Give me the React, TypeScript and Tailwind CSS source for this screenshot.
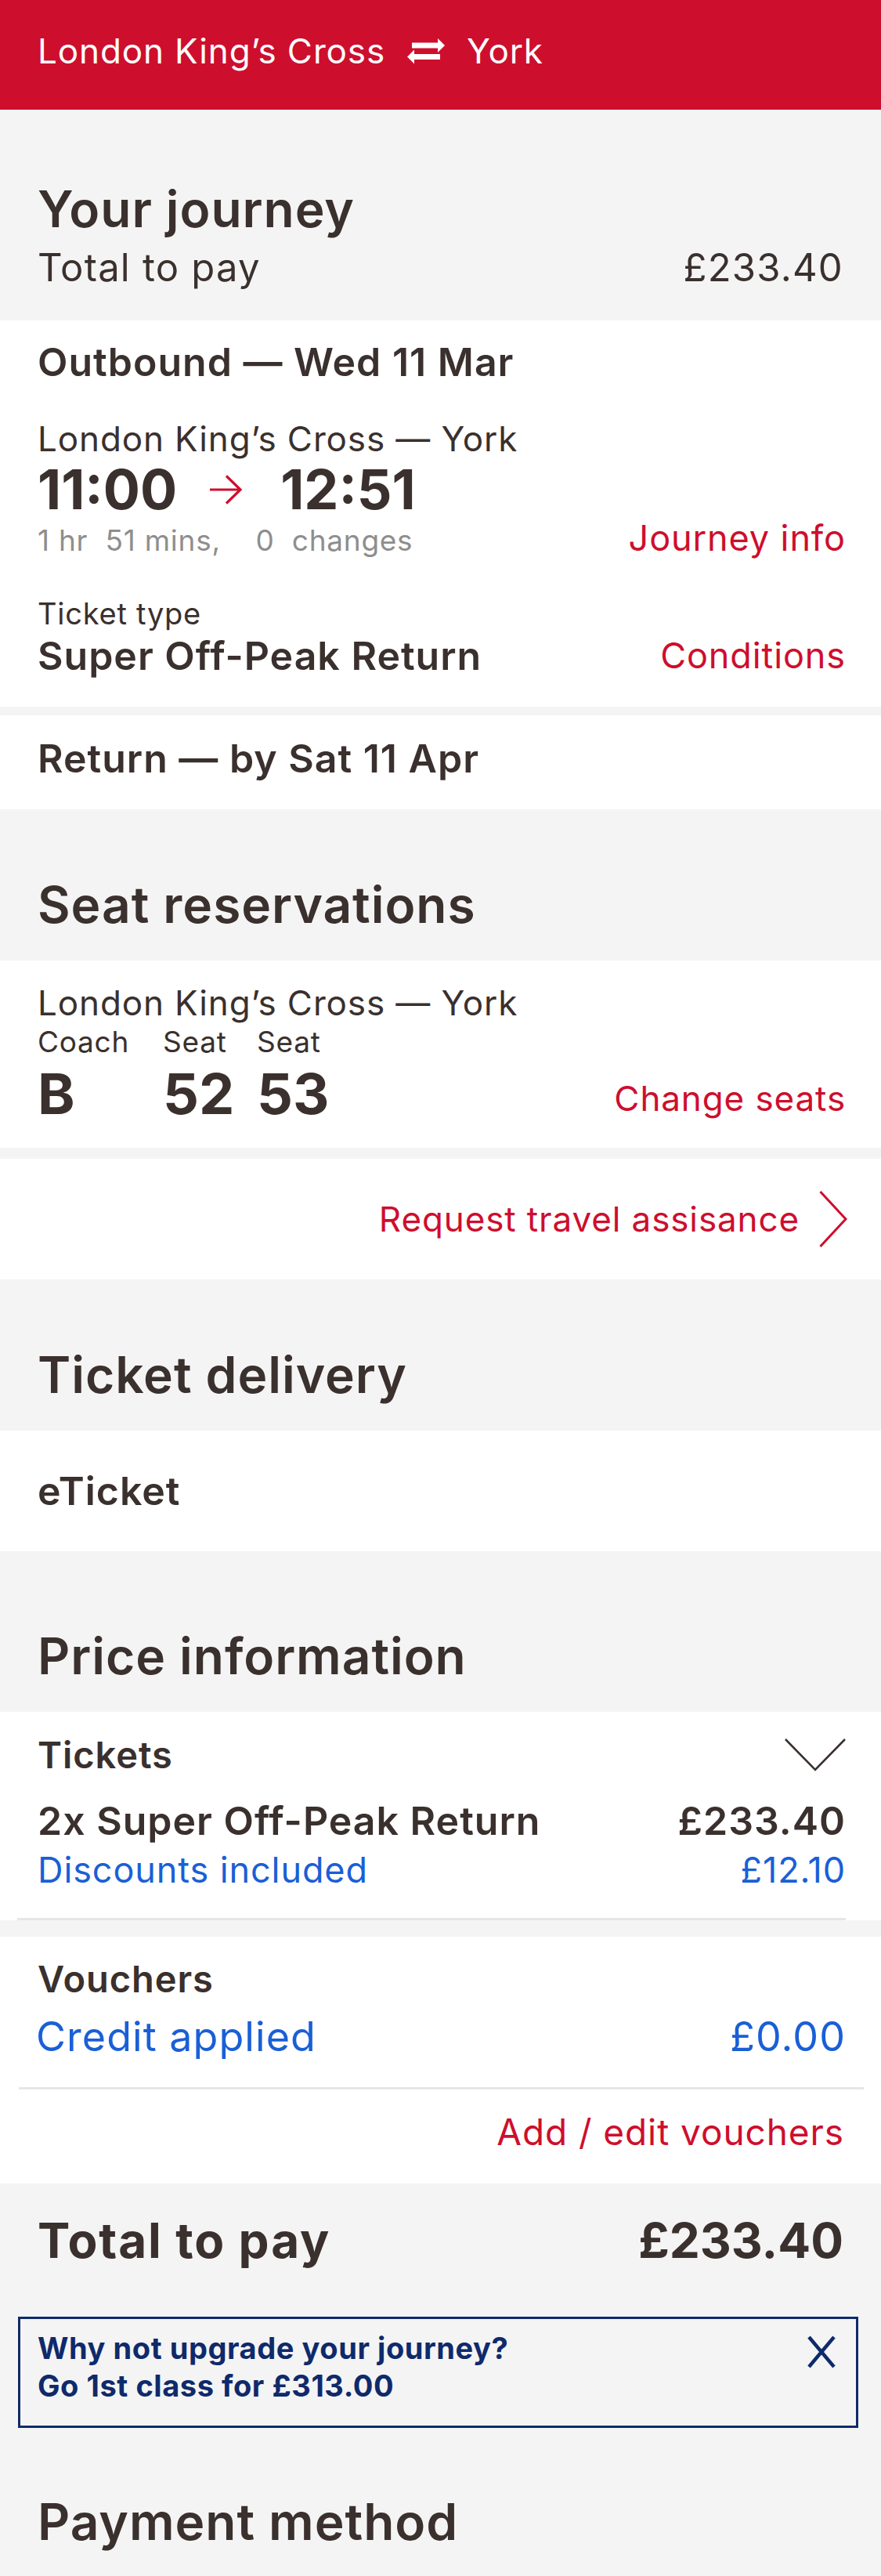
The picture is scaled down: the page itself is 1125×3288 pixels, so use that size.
import React from "react";

const RED = "text-[#ce0e2d]";

function SwapIcon() {
  return (
    <svg width="48" height="34" viewBox="0 0 48 34" className="mx-[28px] shrink-0" fill="#ffffff">
      <rect x="6" y="6.5" width="34" height="7" />
      <polygon points="39,1 48,10 39,19" />
      <rect x="8" y="21" width="34" height="7" />
      <polygon points="9,15.5 0,24.5 9,33.5" />
    </svg>
  );
}

function RightArrow() {
  return (
    <svg width="44" height="38" viewBox="0 0 44 38" className="ml-[40px] mr-[48px] shrink-0" fill="none" stroke="#ce0e2d" strokeWidth="3.2">
      <line x1="2" y1="19" x2="40" y2="19" />
      <polyline points="23,1.5 41,19 23,36.5" />
    </svg>
  );
}

function Chevron() {
  return (
    <svg width="36" height="72" viewBox="0 0 36 72" fill="none" stroke="#ce0e2d" strokeWidth="3" className="shrink-0">
      <polyline points="1.5,1 34,36 1.5,71" />
    </svg>
  );
}

function ChevronDown() {
  return (
    <svg width="78" height="42" viewBox="0 0 78 42" fill="none" stroke="#3a302d" strokeWidth="2.6" className="shrink-0">
      <polyline points="1,1 39,40 77,1" />
    </svg>
  );
}

function CloseX() {
  return (
    <svg width="44" height="42" viewBox="0 0 44 42" fill="none" stroke="#0f2a6b" strokeWidth="4.5" className="shrink-0">
      <line x1="6" y1="2" x2="38" y2="40" />
      <line x1="38" y1="2" x2="6" y2="40" />
    </svg>
  );
}

function SectionTitle({ children, pt }: { children: React.ReactNode; pt: string }) {
  return (
    <div className={`${pt} pb-[36px] px-[48px]`}>
      <h2 className="text-[64px] leading-[70px] font-semibold tracking-[0.015em]">{children}</h2>
    </div>
  );
}

export default function App() {
  return (
    <div className="min-h-screen w-[1125px] bg-[#f4f4f4] text-[#3a302d] font-['Inter',sans-serif]">
      {/* Header */}
      <div className="h-[140px] bg-[#ce0e2d] px-[48px] flex items-center pb-[10px] text-white text-[44px] tracking-[0.02em]">
        <span>London King’s Cross</span>
        <SwapIcon />
        <span>York</span>
      </div>

      {/* Your journey */}
      <div className="pt-[92px] pb-[37px] px-[48px]">
        <h2 className="text-[64px] leading-[70px] font-semibold tracking-[0.015em]">Your journey</h2>
        <div className="mt-[10px] flex justify-between items-center text-[49px] leading-[60px] tracking-[0.025em]">
          <span>Total to pay</span>
          <span>£233.40</span>
        </div>
      </div>

      {/* Outbound card */}
      <div className="bg-white pl-[48px] pr-[45px] pt-[25px] pb-[37px]">
        <div className="text-[50px] leading-[56px] font-semibold tracking-[0.02em]">Outbound — Wed 11 Mar</div>
        <div className="mt-[45px] text-[44px] leading-[50px] tracking-[0.02em]">London King’s Cross — York</div>
        <div className="-mt-[2px] flex items-center text-[70px] leading-[84px] font-bold">
          <span>11:00</span>
          <RightArrow />
          <span>12:51</span>
        </div>
        <div className="flex justify-between items-baseline">
          <span className="text-[37px] leading-[40px] text-[#8e8e8e] tracking-[0.02em]">
            1 hr&nbsp; 51 mins,&nbsp;&nbsp;&nbsp; 0&nbsp; changes
          </span>
          <span className={`text-[45px] leading-[40px] ${RED} tracking-[0.02em]`}>Journey info</span>
        </div>
        <div className="mt-[51px] flex justify-between items-end">
          <div>
            <div className="text-[38px] leading-[44px] tracking-[0.02em]">Ticket type</div>
            <div className="mt-[4px] text-[50px] leading-[56px] font-semibold tracking-[0.02em]">Super Off-Peak Return</div>
          </div>
          <span className={`text-[45px] leading-[56px] ${RED} tracking-[0.02em]`}>Conditions</span>
        </div>
      </div>

      <div className="h-[11px]" />

      {/* Return */}
      <div className="bg-white h-[120px] px-[48px] flex items-center pb-[10px]">
        <div className="text-[50px] leading-[56px] font-semibold tracking-[0.02em]">Return — by Sat 11 Apr</div>
      </div>

      <SectionTitle pt="pt-[87px]">Seat reservations</SectionTitle>

      {/* Seats card */}
      <div className="bg-white pl-[48px] pr-[45px] pt-[28px] pb-[26px]">
        <div className="text-[44px] leading-[53px] tracking-[0.02em]">London King’s Cross — York</div>
        <div className="flex justify-between items-end">
          <div className="grid grid-cols-[160px_120px_auto]">
            <span className="text-[37px] leading-[45px] tracking-[0.02em]">Coach</span>
            <span className="text-[37px] leading-[45px] tracking-[0.02em]">Seat</span>
            <span className="text-[37px] leading-[45px] tracking-[0.02em]">Seat</span>
            <span className="text-[72px] leading-[87px] font-bold">B</span>
            <span className="text-[72px] leading-[87px] font-bold">52</span>
            <span className="text-[72px] leading-[87px] font-bold">53</span>
          </div>
          <span className={`mb-[9px] text-[44px] leading-[56px] ${RED} tracking-[0.02em]`}>Change seats</span>
        </div>
      </div>

      <div className="h-[14px]" />

      {/* Request assistance */}
      <div className="bg-white h-[154px] pr-[43px] flex items-center justify-end gap-[25px]">
        <span className={`text-[44px] leading-[50px] ${RED} tracking-[0.02em]`}>Request travel assisance</span>
        <Chevron />
      </div>

      <SectionTitle pt="pt-[87px]">Ticket delivery</SectionTitle>

      <div className="bg-white h-[154px] px-[48px] flex items-center">
        <span className="text-[50px] leading-[56px] font-semibold tracking-[0.02em]">eTicket</span>
      </div>

      <SectionTitle pt="pt-[99px]">Price information</SectionTitle>

      {/* Tickets */}
      <div className="bg-white pt-[27px]">
        <div className="pl-[48px] pr-[45px]">
          <div className="flex justify-between items-center">
            <span className="text-[47px] leading-[56px] font-semibold tracking-[0.02em]">Tickets</span>
            <ChevronDown />
          </div>
          <div className="mt-[28px] flex justify-between items-center text-[50px] leading-[56px] font-semibold tracking-[0.02em]">
            <span>2x Super Off-Peak Return</span>
            <span>£233.40</span>
          </div>
          <div className="mt-[10px] flex justify-between items-center text-[45px] leading-[50px] text-[#1a5fd6] tracking-[0.02em]">
            <span>Discounts included</span>
            <span>£12.10</span>
          </div>
        </div>
        <div className="mt-[36px] ml-[22px] mr-[45px] h-[3px] bg-[#e6e6e6]" />
      </div>

      <div className="h-[21px]" />

      {/* Vouchers */}
      <div className="bg-white pt-[26px] pb-[41px]">
        <div className="pl-[48px] pr-[45px]">
          <div className="text-[47px] leading-[56px] font-semibold tracking-[0.02em]">Vouchers</div>
          <div className="mt-[16px] flex justify-between items-center text-[52px] leading-[60px] text-[#1a5fd6] tracking-[0.02em]">
            <span className="-ml-[2px]">Credit applied</span>
            <span>£0.00</span>
          </div>
        </div>
        <div className="mt-[34px] ml-[24px] mr-[22px] h-[3px] bg-[#e6e6e6]" />
        <div className={`mt-[29px] pr-[47px] text-right text-[46px] leading-[50px] ${RED} tracking-[0.02em]`}>
          Add / edit vouchers
        </div>
      </div>

      {/* Total */}
      <div className="pt-[38px] pl-[48px] pr-[48px] flex justify-between items-center text-[62px] leading-[70px] font-bold">
        <span className="tracking-[0.03em]">Total to pay</span>
        <span>£233.40</span>
      </div>

      {/* Upgrade box */}
      <div className="mt-[62px] ml-[23px] mr-[29px] border-[3px] border-[#0f2a6b] pl-[22px] pr-[22px] pt-[13px] pb-[27px] flex justify-between items-start">
        <div className="text-[38px] leading-[48px] font-bold text-[#0f2a6b] tracking-[0.015em]">
          <div>Why not upgrade your journey?</div>
          <div>Go 1st class for £313.00</div>
        </div>
        <div className="mt-[8px]">
          <CloseX />
        </div>
      </div>

      <div className="pt-[85px] pb-[33px] px-[48px]">
        <h2 className="text-[64px] leading-[70px] font-semibold tracking-[0.015em]">Payment method</h2>
      </div>
    </div>
  );
}
